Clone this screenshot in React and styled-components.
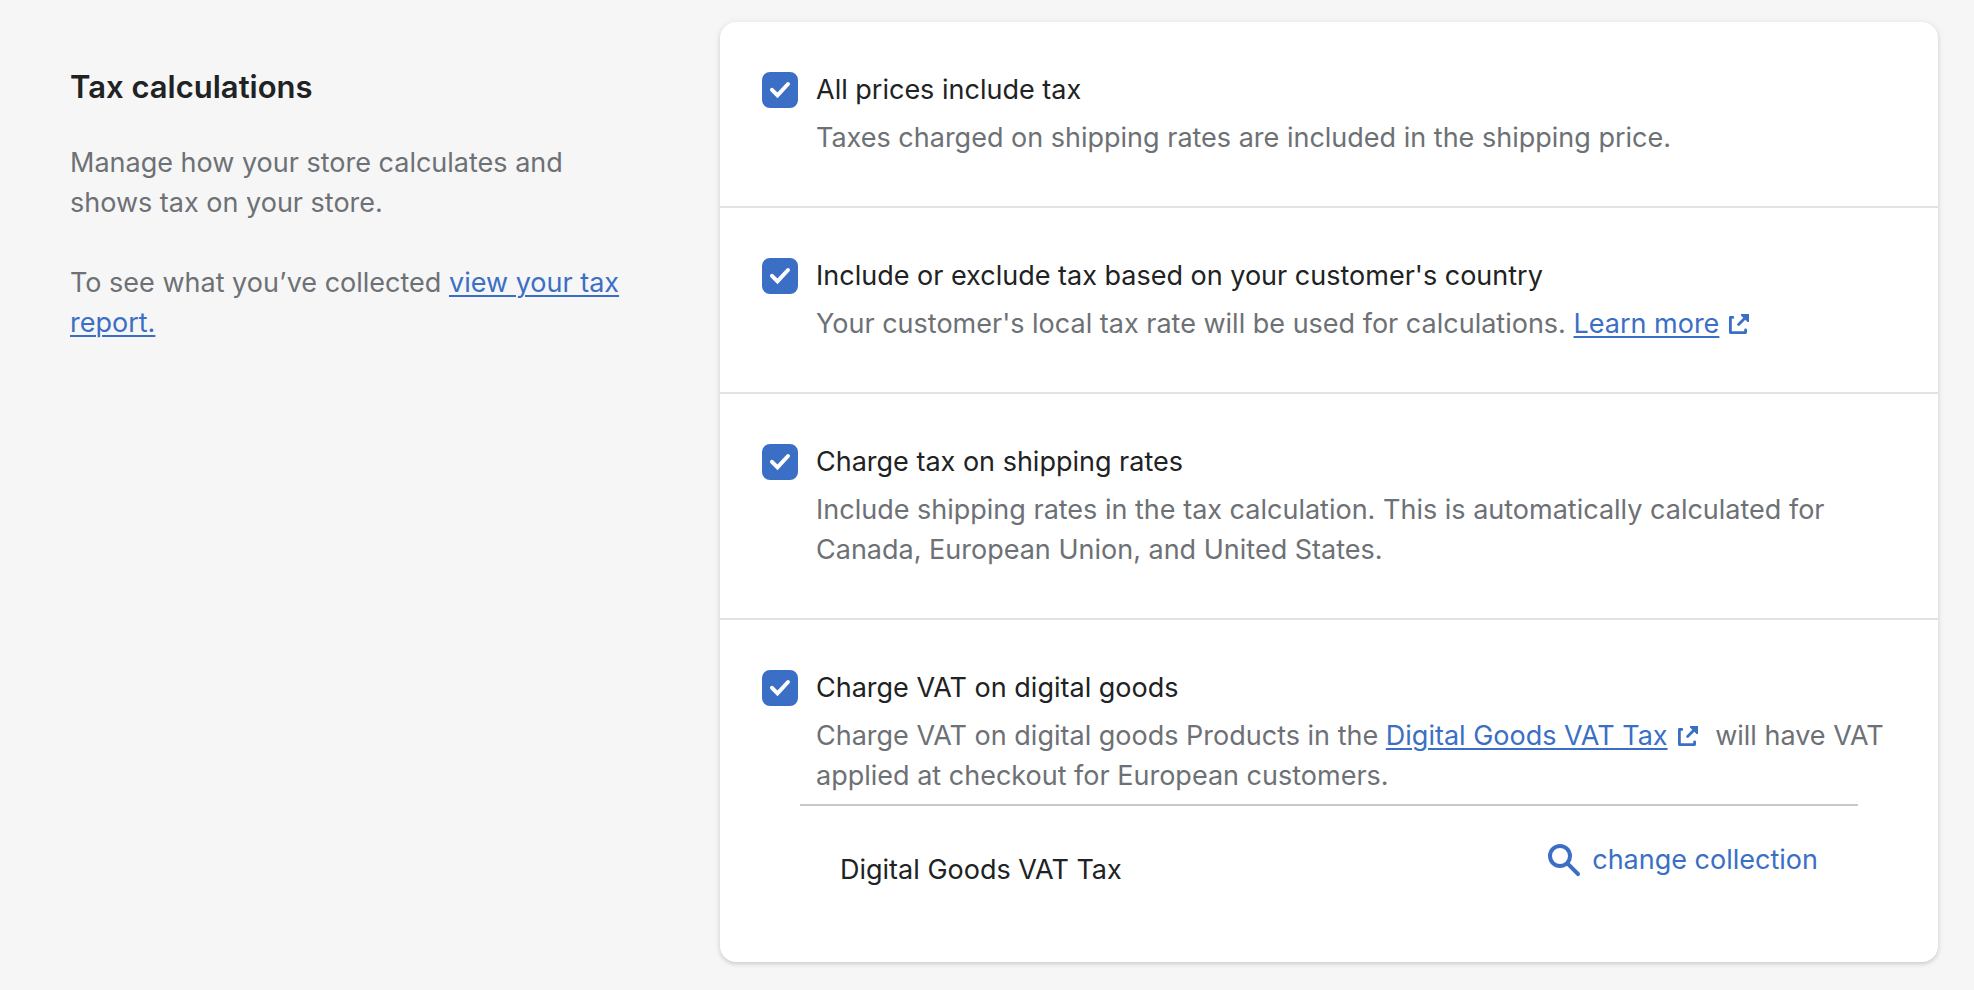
import styled, { createGlobalStyle } from 'styled-components';
import { useState } from 'react';

const COLORS = {
  BACKGROUND: '#f6f6f6',
  WHITE: '#ffffff',
  TEXT: '#202223',
  SUBDUED: '#6d7175',
  BLUE: '#3b6fc5',
  DIVIDER: '#e2e2e3',
  LINE: '#c9c9cd',
};
const { BACKGROUND, WHITE, TEXT, SUBDUED, BLUE, DIVIDER, LINE } = COLORS;

export default function App() {
  return (
    <>
      <GlobalStyle />
      <Page>
        <Annotation>
          <Title>Tax calculations</Title>
          <p>Manage how your store calculates and shows tax on your store.</p>
          <p>
            To see what you’ve collected <Link href="#report">view your tax report.</Link>
          </p>
        </Annotation>

        <Card>
          <Setting
            id="prices"
            label="All prices include tax"
            help="Taxes charged on shipping rates are included in the shipping price."
          />
          <Setting
            id="country"
            label="Include or exclude tax based on your customer's country"
            help={
              <>
                Your customer's local tax rate will be used for calculations.{' '}
                <ExternalLink href="#learn">Learn more</ExternalLink>
              </>
            }
          />
          <Setting
            id="shipping"
            label="Charge tax on shipping rates"
            help="Include shipping rates in the tax calculation. This is automatically calculated for Canada, European Union, and United States."
          />
          <Setting
            id="vat"
            label="Charge VAT on digital goods"
            help={
              <>
                Charge VAT on digital goods Products in the{' '}
                <ExternalLink href="#collection">Digital Goods VAT Tax</ExternalLink> will have VAT applied at
                checkout for European customers.
              </>
            }
          >
            <Collection>
              <CollectionName>Digital Goods VAT Tax</CollectionName>
              <ChangeButton type="button">
                <Icon viewBox="0 0 20 20" aria-hidden="true">
                  <path d="M8 12a4 4 0 1 1 0-8 4 4 0 0 1 0 8zm9.707 4.293-4.82-4.82A5.968 5.968 0 0 0 14 8 6 6 0 0 0 2 8a6 6 0 0 0 6 6 5.968 5.968 0 0 0 3.473-1.113l4.82 4.82a.997.997 0 0 0 1.414 0 .999.999 0 0 0 0-1.414z" />
                </Icon>
                change collection
              </ChangeButton>
            </Collection>
          </Setting>
        </Card>
      </Page>
    </>
  );
}

function Setting({ id, label, help, children }) {
  const [checked, setChecked] = useState(true);

  return (
    <Section>
      <Choice>
        <CheckboxWrapper>
          <Checkbox
            type="checkbox"
            id={id}
            checked={checked}
            aria-describedby={`${id}-help`}
            onChange={() => setChecked(!checked)}
          />
          <Tick viewBox="0 0 36 36" aria-hidden="true">
            <path d="M10 17.8l5.5 5.6L26 12" />
          </Tick>
        </CheckboxWrapper>
        <Label htmlFor={id}>{label}</Label>
        <Help id={`${id}-help`}>{help}</Help>
      </Choice>
      {children}
    </Section>
  );
}

function ExternalLink({ href, children }) {
  return (
    <IconLink href={href}>
      <span>{children}</span>
      <Icon viewBox="0 0 40 40" aria-hidden="true">
        <path
          d="M13.8 13.4h-2.4v15.2h15.2v-2.6M19.6 20.4l7.4-7.4"
          fill="none"
          stroke="currentColor"
          strokeWidth="2.8"
          strokeLinecap="round"
          strokeLinejoin="round"
        />
        <path d="M22 10h8v8h-1.4L22 11.4z" />
      </Icon>
    </IconLink>
  );
}

const GlobalStyle = createGlobalStyle`
  * {
    box-sizing: border-box;
  }

  body {
    margin: 0;
    background-color: ${BACKGROUND};
    font-family: Inter, 'Liberation Sans', sans-serif;
    font-size: 27px;
    line-height: 40px;
    color: ${TEXT};
  }

  h2,
  p {
    margin: 0;
  }
`;

const Page = styled.main`
  padding: 22px 36px 28px;

  display: grid;
  grid-template-columns: minmax(0, 1fr) minmax(0, 2fr);
  align-items: start;
  gap: 75px;
`;

const Annotation = styled.section`
  padding: 45px 20px 0 34px;

  color: ${SUBDUED};

  p + p {
    margin-top: 40px;
  }
`;

const Title = styled.h2`
  margin-bottom: 36px;

  font-size: 31px;
  font-weight: 600;
  color: ${TEXT};
`;

const Card = styled.section`
  background-color: ${WHITE};
  border-radius: 16px;
  box-shadow: 0 0 10px rgba(23, 24, 24, 0.05), 0 2px 4px rgba(0, 0, 0, 0.15);
`;

const Section = styled.div`
  padding: 48px 42px;

  & + & {
    border-top: 2px solid ${DIVIDER};
  }
`;

const Choice = styled.div`
  display: grid;
  grid-template-columns: 36px 1fr;
  column-gap: 18px;
  row-gap: 8px;
  align-items: center;
`;

const CheckboxWrapper = styled.span`
  width: 36px;
  height: 36px;

  display: grid;

  > * {
    grid-area: 1 / 1;
  }
`;

const Checkbox = styled.input`
  appearance: none;
  width: 36px;
  height: 36px;
  margin: 0;
  border: 4px solid ${SUBDUED};
  border-radius: 8px;

  cursor: pointer;

  &:checked {
    background-color: ${BLUE};
    border-color: ${BLUE};
  }
`;

const Tick = styled.svg`
  width: 36px;
  height: 36px;

  pointer-events: none;

  fill: none;
  stroke: ${WHITE};
  stroke-width: 4;
  stroke-linecap: round;
`;

const Label = styled.label`
  justify-self: start;

  cursor: pointer;
`;

const Help = styled.p`
  grid-column: 2;

  color: ${SUBDUED};
`;

const Link = styled.a`
  color: ${BLUE};
  text-decoration: underline 2px;
  text-underline-offset: 3px;
`;

const IconLink = styled.a`
  color: ${BLUE};
  text-decoration: none;
  white-space: nowrap;

  span {
    text-decoration: underline 2px;
    text-underline-offset: 3px;
  }
`;

const Icon = styled.svg`
  width: 40px;
  height: 40px;

  display: inline-block;
  vertical-align: top;

  fill: currentColor;
`;

const Collection = styled.div`
  margin: 8px 38px 0;
  padding: 34px 40px 24px;
  border-top: 2px solid ${LINE};

  display: flex;
  align-items: flex-start;
  justify-content: space-between;
`;

const CollectionName = styled.span`
  padding-top: 10px;
`;

const ChangeButton = styled.button`
  padding: 0;
  background: none;
  border: none;

  display: flex;
  gap: 8px;

  cursor: pointer;

  font: inherit;
  color: ${BLUE};
`;
